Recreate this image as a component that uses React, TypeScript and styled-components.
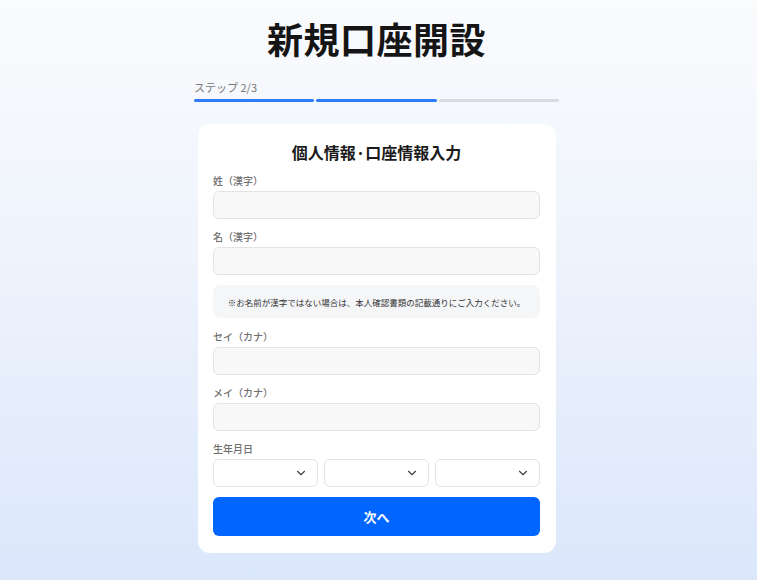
import React, { FC } from 'react'
import styled, { createGlobalStyle } from 'styled-components'
import { ChevronDown } from 'lucide-react'

const GlobalStyle = createGlobalStyle`
    html, body {
        margin: 0;
        padding: 0;
    }
    body {
        font-family: "Noto Sans CJK JP", "Noto Sans", sans-serif;
        background: linear-gradient(180deg, #fafbfd 0%, #eef3fc 45%, #dbe7fb 100%);
        min-height: 100vh;
    }
`

const fields = ['姓（漢字）', '名（漢字）']
const kanaFields = ['セイ（カナ）', 'メイ（カナ）']

const App: FC = () => {
    return <Page>
        <GlobalStyle />
        <Title>新規口座開設</Title>
        <Steps>
            <small>ステップ 2/3</small>
            <div className='bars'>
                <Bar done />
                <Bar done />
                <Bar />
            </div>
        </Steps>
        <Card>
            <h2>個人情報·口座情報入力</h2>
            {fields.map(f => (
                <Field key={f}>
                    <label>{f}</label>
                    <Input />
                </Field>
            ))}
            <Note>※お名前が漢字ではない場合は、本人確認書類の記載通りにご入力ください。</Note>
            {kanaFields.map(f => (
                <Field key={f}>
                    <label>{f}</label>
                    <Input />
                </Field>
            ))}
            <Field>
                <label>生年月日</label>
                <div className='selects'>
                    {[0, 1, 2].map(i => (
                        <Select key={i}>
                            <ChevronDown size={14} color='#444' strokeWidth={2} />
                        </Select>
                    ))}
                </div>
            </Field>
            <Button>次へ</Button>
        </Card>
    </Page>
}

export default App

const Page = styled.div`
    display: flex;
    flex-direction: column;
    align-items: center;
    padding: 16px 4px 28px 0;
    box-sizing: border-box;
`

const Title = styled.h1`
    margin: 0;
    font-size: 36px;
    line-height: 44px;
    font-weight: 700;
    color: #151515;
    letter-spacing: 0.5px;
`

const Steps = styled.div`
    width: 365px;
    margin-top: 20px;
    display: flex;
    flex-direction: column;
    gap: 5px;

    small {
        font-size: 11px;
        line-height: 14px;
        color: #777;
    }

    .bars {
        display: flex;
        gap: 2px;
    }
`

const Bar = styled.div<{ done?: boolean }>`
    flex: 1;
    height: 3px;
    border-radius: 2px;
    background: ${p => (p.done ? '#2f7cf6' : '#d9dbdf')};
`

const Card = styled.div`
    width: 358px;
    margin-top: 22px;
    margin-left: 1px;
    box-sizing: border-box;
    padding: 16px 16px 17px 15px;
    background: #fff;
    border-radius: 12px;
    display: flex;
    flex-direction: column;
    gap: 10px;

    h2 {
        margin: 0 0 -1px;
        text-align: center;
        font-size: 16px;
        line-height: 24px;
        font-weight: 700;
        color: #1a1a1a;
    }
`

const Field = styled.div`
    display: flex;
    flex-direction: column;
    gap: 3px;

    label {
        font-size: 10px;
        line-height: 15px;
        font-weight: 500;
        color: #6f6f6f;
    }

    .selects {
        display: grid;
        grid-template-columns: repeat(3, 1fr);
        gap: 6px;
    }
`

const Input = styled.div`
    height: 28px;
    box-sizing: border-box;
    background: #f8f8f9;
    border: 1px solid #e2e3e5;
    border-radius: 6px;
`

const Select = styled.div`
    height: 28px;
    box-sizing: border-box;
    background: #fff;
    border: 1px solid #e2e3e5;
    border-radius: 6px;
    display: flex;
    align-items: center;
    justify-content: flex-end;
    padding-right: 9px;
`

const Note = styled.div`
    height: 33px;
    margin-bottom: 1px;
    display: flex;
    align-items: center;
    justify-content: center;
    background: #f5f6f8;
    border-radius: 8px;
    font-size: 8.5px;
    color: #333;
`

const Button = styled.button`
    height: 39px;
    border: none;
    border-radius: 6px;
    background: #0066ff;
    color: #fff;
    font-family: inherit;
    font-size: 13px;
    font-weight: 700;
`
